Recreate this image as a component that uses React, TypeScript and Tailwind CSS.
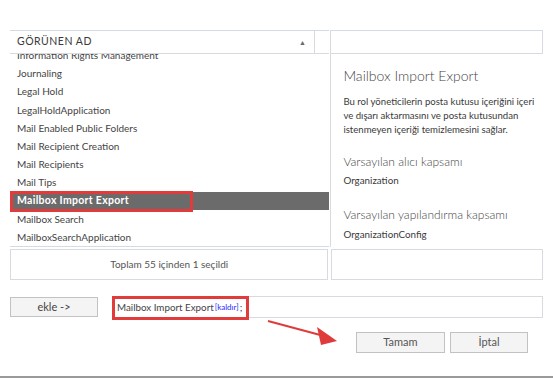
const items = [
  'Information Rights Management',
  'Journaling',
  'Legal Hold',
  'LegalHoldApplication',
  'Mail Enabled Public Folders',
  'Mail Recipient Creation',
  'Mail Recipients',
  'Mail Tips',
  'Mailbox Import Export',
  'Mailbox Search',
  'MailboxSearchApplication',
]

const selected = 'Mailbox Import Export'

export default function App() {
  return (
    <div
      className="w-[553px] h-[378px] bg-white relative overflow-hidden text-[#444] border-b-2 border-[#9a9a9a]"
      style={{ fontFamily: 'Lato, "Noto Sans", sans-serif' }}
    >
      <div className="pt-[30px] px-[10px]">
        {/* top panels */}
        <div className="flex">
          {/* list */}
          <div className="w-[320px] flex flex-col">
            <div className="flex h-[24px] border-t border-b border-[#d5dbe0]">
              <div className="w-[305px] flex items-center justify-between pl-[7px] pr-[8px] border-r border-[#d5dbe0]">
                <span className="text-[10.5px] tracking-[0.5px] text-[#3a3a3a]">GÖRÜNEN AD</span>
                <span className="text-[7px] text-[#666] leading-none">▲</span>
              </div>
              <div className="flex-1" />
            </div>
            <div className="h-[193px] overflow-hidden border-b border-[#d5dbe0]">
              <div className="-mt-[7.5px]">
                {items.map((it) => {
                  const sel = it === selected
                  return (
                    <div
                      key={it}
                      className={`h-[18.2px] flex items-center pl-[7px] ${
                        sel ? 'bg-[#6b6b6b] text-white font-bold text-[10.5px] tracking-[0.3px]' : 'text-[10px]'
                      }`}
                    >
                      {sel ? (
                        <span className="relative">
                          {it}
                          <span className="absolute -left-[7px] -top-[2px] w-[183px] h-[21px] border-[3px] border-[#e23b3b]" />
                        </span>
                      ) : (
                        it
                      )}
                    </div>
                  )
                })}
              </div>
            </div>
          </div>
          {/* details */}
          <div className="w-[213px] ml-px flex flex-col">
            <div className="h-[24px] border border-[#d5dbe0]" />
            <div className="h-[193px] border-l border-[#d5dbe0] pl-[12px] pt-[12px]">
              <div className="text-[14px] font-light leading-[20px] text-[#444]">Mailbox Import Export</div>
              <div className="mt-[9px] text-[9.6px] leading-[14px] text-[#3a3a3a]">
                Bu rol yöneticilerin posta kutusu içeriğini içeri ve dışarı aktarmasını ve posta kutusundan istenmeyen içeriği temizlemesini sağlar.
              </div>
              <div className="mt-[16px] text-[12px] font-light leading-[17px] text-[#444]">Varsayılan alıcı kapsamı</div>
              <div className="mt-[4px] text-[9.8px] leading-[13px] text-[#3a3a3a]">Organization</div>
              <div className="mt-[19px] text-[12px] font-light leading-[17px] text-[#444]">Varsayılan yapılandırma kapsamı</div>
              <div className="mt-[5px] text-[9.8px] leading-[13px] text-[#3a3a3a]">OrganizationConfig</div>
            </div>
          </div>
        </div>

        {/* footer boxes */}
        <div className="flex mt-[2px] h-[31px]">
          <div className="w-[319px] border border-[#d5dbe0] flex items-center justify-center text-[10px] text-[#555]">
            Toplam 55 içinden 1 seçildi
          </div>
          <div className="w-[212px] ml-[3px] border border-[#d5dbe0]" />
        </div>

        {/* add row */}
        <div className="flex items-center mt-[16px] h-[22px]">
          <button className="w-[88px] h-[20px] bg-[#f4f4f4] border border-[#c2c2c2] text-[11px] text-[#444]">
            ekle -&gt;
          </button>
          <div className="ml-[14px] flex-1 h-[22px] border border-[#d5dbe0] flex items-center relative">
            <div className="absolute -left-[1px] -top-[1px] w-[137px] h-[24px] border-[3px] border-[#e23b3b]" />
            <span className="pl-[4px] text-[9.8px] text-[#444]">Mailbox Import Export</span>
            <span className="text-[8px] text-[#2a2aff] ml-px">[kaldır]</span>
            <span className="text-[10px] text-[#444] ml-[1px]">;</span>
          </div>
        </div>

        {/* ok cancel */}
        <div className="flex justify-end mt-[14px] pr-[15px] gap-[5px]">
          <button className="w-[89px] h-[21px] bg-[#f4f4f4] border border-[#c2c2c2] text-[11px] text-[#555]">Tamam</button>
          <button className="w-[78px] h-[21px] bg-[#f4f4f4] border border-[#c2c2c2] text-[11px] text-[#555]">İptal</button>
        </div>
      </div>

      {/* red arrow */}
      <svg className="absolute left-[266px] top-[318px]" width="75" height="30" viewBox="0 0 75 30">
        <line x1="2" y1="3" x2="58" y2="18" stroke="#e03b3b" strokeWidth="2" />
        <polygon points="71,23 51,9 55,27" fill="#e03b3b" />
      </svg>
    </div>
  )
}
